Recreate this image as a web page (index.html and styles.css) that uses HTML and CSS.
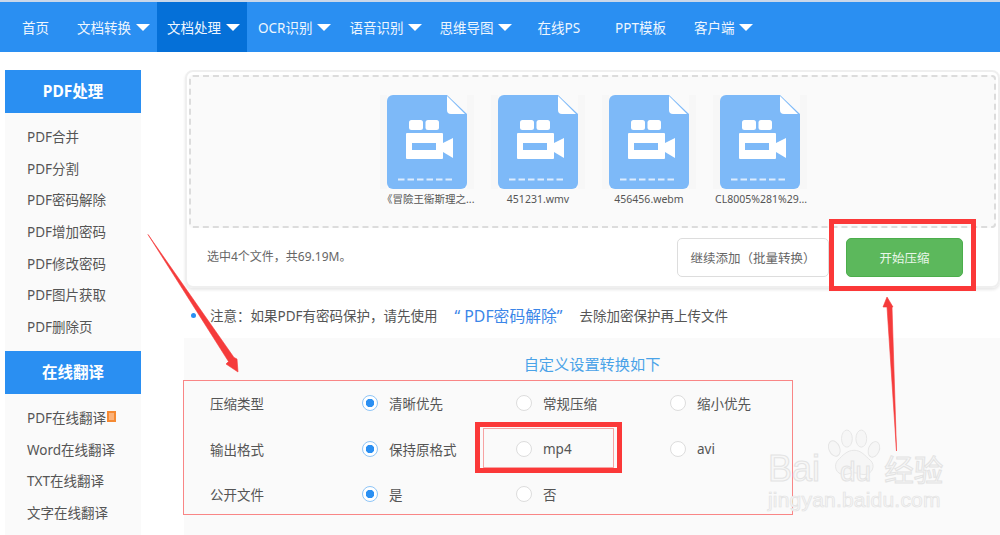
FILE: index.html
```html
<!DOCTYPE html>
<html lang="zh">
<head>
<meta charset="utf-8">
<title>文档处理</title>
<link rel="stylesheet" href="styles.css">
</head>
<body>
<div class="page">
  <nav class="nav">
    <a class="nav-item nav-home">首页</a>
    <a class="nav-item">文档转换<i class="caret"></i></a>
    <a class="nav-item active">文档处理<i class="caret"></i></a>
    <a class="nav-item nav-ocr">OCR识别<i class="caret"></i></a>
    <a class="nav-item">语音识别<i class="caret"></i></a>
    <a class="nav-item">思维导图<i class="caret"></i></a>
    <a class="nav-item nav-plain">在线PS</a>
    <a class="nav-item nav-plain">PPT模板</a>
    <a class="nav-item nav-client">客户端<i class="caret"></i></a>
  </nav>
  <div class="content">
    <aside class="side">
      <h3 class="side-head">PDF处理</h3>
      <ul class="side-list">
        <li>PDF合并</li><li>PDF分割</li><li>PDF密码解除</li><li>PDF增加密码</li><li>PDF修改密码</li><li>PDF图片获取</li><li>PDF删除页</li>
      </ul>
      <h3 class="side-head">在线翻译</h3>
      <ul class="side-list">
        <li>PDF在线翻译<i class="badge"></i></li><li>Word在线翻译</li><li>TXT在线翻译</li><li>文字在线翻译</li>
      </ul>
    </aside>
    <main class="main">
      <section class="card">
        <div class="drop">
          <div class="file">
            <svg class="file-icon" viewBox="0 0 80 94"><use href="#video-file"/></svg>
            <span class="file-name">《冒險王衞斯理之...</span>
          </div>
          <div class="file">
            <svg class="file-icon" viewBox="0 0 80 94"><use href="#video-file"/></svg>
            <span class="file-name">451231.wmv</span>
          </div>
          <div class="file">
            <svg class="file-icon" viewBox="0 0 80 94"><use href="#video-file"/></svg>
            <span class="file-name">456456.webm</span>
          </div>
          <div class="file">
            <svg class="file-icon" viewBox="0 0 80 94"><use href="#video-file"/></svg>
            <span class="file-name">CL8005%281%29...</span>
          </div>
        </div>
        <div class="bar">
          <span class="bar-info">选中4个文件&#xFF0C;共69.19M。</span>
          <button class="btn btn-add">继续添加&#xFF08;批量转换&#xFF09;</button>
          <button class="btn btn-go">开始压缩</button>
        </div>
      </section>
      <p class="note"><i class="dot"></i>注意&#xFF1A;如果PDF有密码保护&#xFF0C;请先使用<a class="note-link">“ PDF密码解除”</a>去除加密保护再上传文件</p>
      <section class="panel">
        <h4 class="panel-title">自定义设置转换如下</h4>
        <div class="form">
          <div class="row">
            <span class="row-label">压缩类型</span>
            <label class="opt"><i class="radio on"></i>清晰优先</label>
            <label class="opt"><i class="radio"></i>常规压缩</label>
            <label class="opt"><i class="radio"></i>缩小优先</label>
          </div>
          <div class="row">
            <span class="row-label">输出格式</span>
            <label class="opt"><i class="radio on"></i>保持原格式</label>
            <label class="opt"><i class="radio"></i>mp4</label>
            <label class="opt"><i class="radio"></i>avi</label>
          </div>
          <div class="row">
            <span class="row-label">公开文件</span>
            <label class="opt"><i class="radio on"></i>是</label>
            <label class="opt"><i class="radio"></i>否</label>
          </div>
        </div>
      </section>
    </main>
  </div>

  <svg class="defs" width="0" height="0">
    <defs>
      <g id="video-file">
        <path d="M6 0H60L80 19V88a6 6 0 0 1-6 6H6a6 6 0 0 1-6-6V6a6 6 0 0 1 6-6z" fill="#7db9f8"/>
        <path d="M60 1V15a4 4 0 0 0 4 4H78z" fill="#fff"/>
        <rect x="22" y="25" width="14" height="10" rx="2.5" fill="#fff"/>
        <rect x="38.500" y="25" width="13.500" height="10" rx="2.500" fill="#fff"/>
        <rect x="19" y="38" width="37" height="26" rx="1" fill="#fff"/>
        <rect x="25" y="48" width="24" height="7" fill="#7db9f8"/>
        <path d="M56 48L66 43V63L56 57z" fill="#fff"/>
        <path d="M11 84.500H67" stroke="#dcecfd" stroke-width="2" stroke-dasharray="6.500 3"/>
      </g>
    </defs>
  </svg>

  <div class="box box-go"></div>
  <div class="box box-mp4"><div class="box-inner"></div></div>
  <svg class="arrows" viewBox="0 0 1000 535">
    <path d="M148 234.500L234 357.500L237 359L238 372L226 364L228.500 361.500z" fill="#f53b3b" stroke="#f53b3b" stroke-width=".6"/>
    <path d="M896.500 451L892 307L893 307L887 297L883 307L887 307z" fill="#f53b3b" stroke="#f53b3b" stroke-width=".6"/>
  </svg>

  <div class="mark">
    <svg class="paw" viewBox="0 0 60 52">
      <g fill="#f6f6f6" stroke="#e4e4e4">
        <ellipse cx="7" cy="21" rx="6" ry="9" transform="rotate(-22 7 21)"/>
        <ellipse cx="21" cy="10" rx="6" ry="9.500"/>
        <ellipse cx="37" cy="10" rx="6" ry="9.500"/>
        <ellipse cx="51" cy="22" rx="6" ry="9" transform="rotate(22 51 22)"/>
        <path d="M29 23c8 0 12 6 18 11s3 16-7 16c-4 0-7-2-11-2s-7 2-11 2c-10 0-12-11-7-16s10-11 18-11z"/>
      </g>
    </svg>
    <div class="mark-top"><span>Bai</span><span class="mark-du">du</span><span class="mark-cn">经验</span></div>
    <div class="mark-url">jingyan.baidu.com</div>
  </div>
</div>
</body>
</html>
```

FILE: styles.css
```css
* { box-sizing: border-box; }
html, body { margin: 0; padding: 0; }
body {
  background: #fff;
  font-family: "Noto Sans", "Noto Sans CJK SC", sans-serif;
  color: #555;
  font-size: 13.5px;
}
i { font-style: normal; }
.page {
  position: relative;
  width: 1000px;
  height: 535px;
  overflow: hidden;
  padding-top: 2px;
  background: linear-gradient(#c9d7ea 0 2px, #fff 2px);
  display: flex;
  flex-direction: column;
}

/* nav */
.nav {
  display: flex;
  flex: none;
  height: 50px;
  background: #2a8ff2;
  color: #eef6fe;
}
.nav-item {
  display: flex;
  align-items: center;
  padding: 0 7px 0 10px;
  white-space: nowrap;
}
.nav-home { padding: 0 10px; margin: 0 8px 0 12px; }
.nav-ocr { padding: 0 8px 0 11px; }
.nav-plain { padding: 0 17px 0 18px; }
.nav-client { padding-left: 11px; }
.active { background: #0570d8; }
.caret {
  width: 0;
  height: 0;
  margin-left: 5px;
  border-left: 7px solid transparent;
  border-right: 7px solid transparent;
  border-top: 7px solid #fff;
}

.content { flex: 1; display: flex; min-height: 0; padding-top: 18px; }

/* sidebar */
.side {
  flex: none;
  width: 136px;
  margin-left: 5px;
  background: #fafafa;
}
.side-head {
  margin: 0;
  height: 43px;
  line-height: 43px;
  text-align: center;
  background: #2a8ff2;
  color: #fff;
  font-size: 15.500px;
  font-weight: 700;
}
.side-list { list-style: none; margin: 0; padding: 9px 0 7px; }
.side-list li {
  height: 31.700px;
  line-height: 31.700px;
  padding-left: 22px;
  color: #555;
  white-space: nowrap;
  display: flex;
  align-items: center;
}
.badge {
  width: 9px;
  height: 11px;
  margin: -4px 0 0 1px;
  background: #f58a33;
  border: 2px solid #f58a33;
  box-shadow: inset 0 0 0 3px #fbb27a;
}

/* main */
.main { flex: 1; margin-left: 44px; min-width: 0; display: flex; flex-direction: column; }
.card {
  flex: none;
  height: 218px;
  border: 2px solid #efefef;
  border-radius: 8px;
  padding: 3px 2px 0;
  box-shadow: 0 2px 3px #e8e8e8;
}
.drop {
  height: 153px;
  display: flex;
  padding: 18px 0 0 196px;
  background: #fafafa;
  border: 2px dashed #dcdcdc;
  border-radius: 4px;
}
.file {
  width: 111px;
  display: flex;
  flex-direction: column;
  align-items: flex-start;
}
.file-icon {
  width: 80px;
  height: 94px;
  display: block;
  box-shadow: 7px 0 #f7f7f7, -7px 0 #f7f7f7;
}
.file-name {
  width: 90px;
  margin: 1px 0 0 -5px;
  font-size: 10.500px;
  line-height: 18px;
  color: #555;
  text-align: center;
  white-space: nowrap;
}
.bar { display: flex; align-items: flex-start; padding: 10px 0 0 18px; }
.bar-info { font-size: 12px; line-height: 38px; color: #666; }
.btn {
  height: 39px;
  border-radius: 5px;
  font: inherit;
  font-size: 12.500px;
  padding: 0;
}
.btn-add {
  width: 152px;
  margin-left: auto;
  background: #fff;
  color: #666;
  border: 1px solid #ddd;
}
.btn-go {
  width: 117px;
  margin: 0 33px 0 17px;
  background: #5cb85c;
  color: #e9f7e9;
  border: 1px solid #4cae4c;
}

.note {
  flex: none;
  height: 50px;
  margin: 0;
  display: flex;
  align-items: center;
  color: #555;
  padding: 4px 0 0 6px;
}
.dot {
  width: 5px;
  height: 5px;
  border-radius: 50%;
  background: #2a8ff2;
  margin-right: 14px;
}
.note-link {
  color: #3b86e8;
  font-size: 15.800px;
  margin: 0 17px 0 17px;
}

.panel { flex: 1; margin-left: -1px; background: #fafafa; }
.panel-title {
  margin: 0;
  height: 42px;
  line-height: 52px;
  text-align: center;
  font-size: 15.200px;
  font-weight: 400;
  color: #4aa3e8;
}
.form {
  width: 610px;
  height: 135px;
  margin-left: -1px;
  border: 1px solid #f98686;
}
.row {
  display: grid;
  grid-template-columns: 178px 154px 154px 1fr;
  align-items: center;
  height: 45.500px;
  padding-bottom: 1.500px;
}
.row-label { padding-left: 26px; color: #555; }
.opt { display: flex; align-items: center; white-space: nowrap; color: #555; }
.radio {
  flex: none;
  width: 16px;
  height: 16px;
  margin-right: 11px;
  border-radius: 50%;
  background: #fff;
  border: 1px solid #ddd;
}
.radio.on {
  border-color: #8ec5f7;
  background: radial-gradient(circle, #2a8ff2 0 4px, #fff 4.500px);
}

/* annotations over the page */
.defs { position: absolute; }
.box { position: absolute; border: 5px solid #fb3838; }
.box-go { left: 829px; top: 219px; width: 147px; height: 72px; }
.box-mp4 { left: 475px; top: 422px; width: 147px; height: 51px; }
.box-inner { position: absolute; left: 3px; top: 1px; right: 3px; bottom: 0; border: 1px solid #f7a3a3; }
.arrows { position: absolute; left: 0; top: 0; width: 1000px; height: 535px; pointer-events: none; }

.mark { position: absolute; left: 766px; top: 426px; width: 184px; height: 100px; color: #f7f7f7; }
.paw { position: absolute; left: 62px; top: 2px; width: 54px; height: 50px; }
.mark-top {
  position: absolute;
  left: 2px;
  top: 22px;
  font-family: "Liberation Sans", sans-serif;
  font-size: 36px;
  line-height: 40px;
  white-space: nowrap;
  -webkit-text-stroke: 1px #e3e3e3;
}
.mark-du { font-size: 28px; margin-left: 20px; }
.mark-cn { font-family: "Noto Sans CJK SC", sans-serif; font-size: 29.500px; margin-left: 13px; }
.mark-url {
  position: absolute;
  left: 2px;
  top: 63px;
  font-family: "Liberation Sans", sans-serif;
  font-size: 21px;
  line-height: 22px;
  letter-spacing: .2px;
  white-space: nowrap;
  -webkit-text-stroke: .7px #e3e3e3;
}
```
